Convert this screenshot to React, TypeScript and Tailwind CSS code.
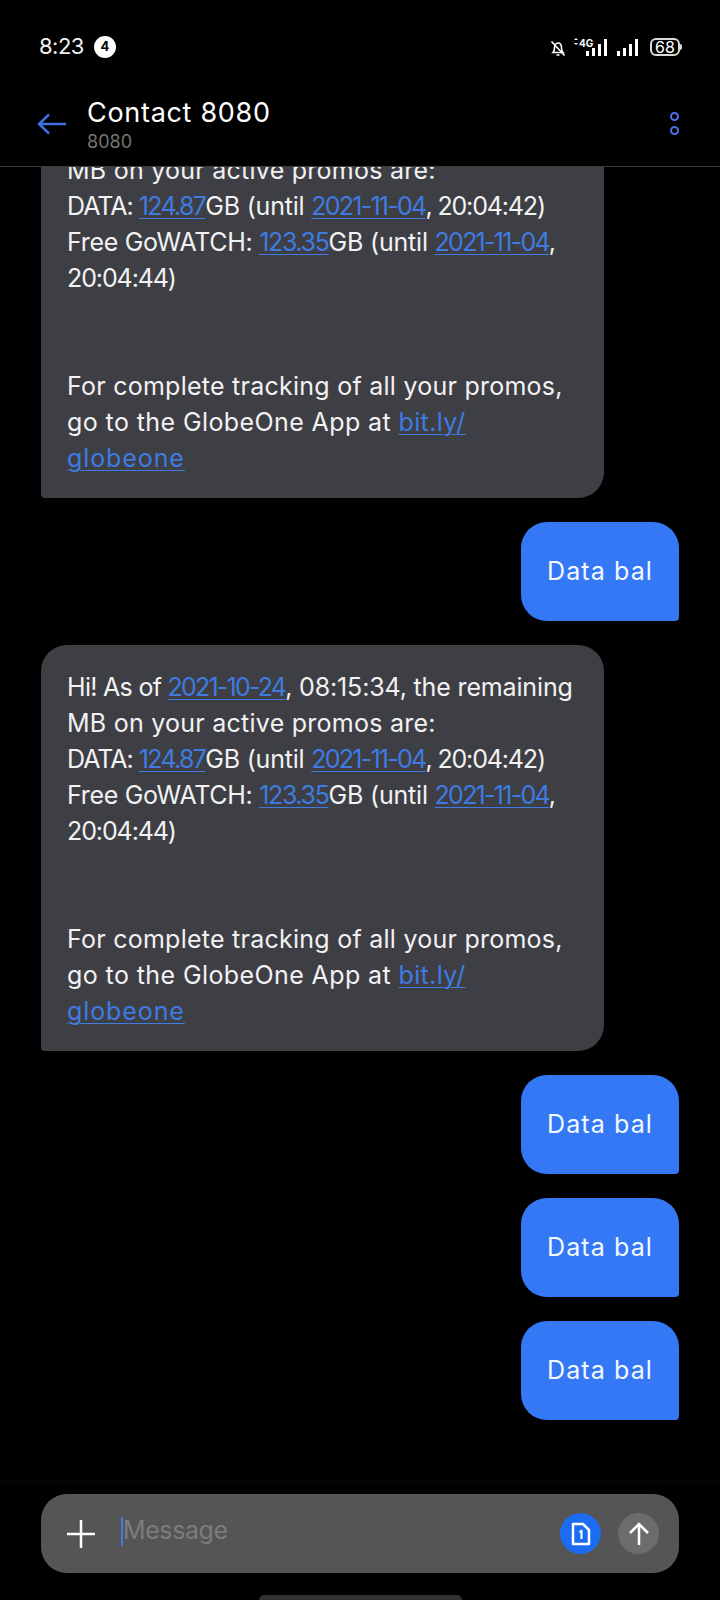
import React from "react";

const Link: React.FC<{ children: React.ReactNode; className?: string }> = ({ children, className }) => (
  <span className={`text-[#3f7be0] underline underline-offset-[3px] decoration-1 ${className}`}>{children}</span>
);

const IncomingBubble = () => (
  <div className="w-[563px] shrink-0 self-start rounded-[26px] rounded-bl-[4px] bg-[#3e3f45] px-[26px] pt-[24px] pb-[22px] text-[25px] leading-[36px] text-[#f2f2f2] whitespace-nowrap">
    <div className="tracking-[-0.15px]">
      <span className="tracking-[-0.7px]">Hi! As of </span>
      <Link className="tracking-[-1.8px]">2021-10-24</Link>, 08:15:34, the remaining
    </div>
    <div className="tracking-[0.25px]">MB on your active promos are:</div>
    <div>
      <span className="tracking-[-1px]">DATA: </span>
      <Link className="tracking-[-1.7px]">124.87</Link>
      <span className="tracking-[-0.2px]">GB (until </span>
      <Link className="tracking-[-1.75px]">2021-11-04</Link>
      <span className="tracking-[-1.15px]">, 20:04:42)</span>
    </div>
    <div>
      <span className="tracking-[-0.3px]">Free GoWATCH: </span>
      <Link className="tracking-[-1.35px]">123.35</Link>
      <span className="tracking-[-0.2px]">GB (until </span>
      <Link className="tracking-[-1.75px]">2021-11-04</Link>,
    </div>
    <div className="tracking-[-1.1px]">20:04:44)</div>
    <div className="h-[72px]" />
    <div className="tracking-[0.25px]">For complete tracking of all your promos,</div>
    <div className="tracking-[0.4px]">
      go to the GlobeOne App at <Link className="tracking-[0.37px]">bit.ly/</Link>
    </div>
    <div>
      <Link className="tracking-[0.9px]">globeone</Link>
    </div>
  </div>
);

const OutgoingBubble = () => (
  <div className="flex h-[99px] w-[158px] shrink-0 items-center justify-center self-end rounded-[26px] rounded-br-[4px] bg-[#3478f6] text-[25px] tracking-[1.1px] text-[#f4f8ff]">
    Data bal
  </div>
);

const StatusIcons = () => (
  <div className="flex items-center text-white">
    <svg width="16" height="17" viewBox="0 0 16 17" fill="none" stroke="currentColor" strokeWidth="1.6" className="mr-[8px] mt-[3px]">
      <path d="M3 12.5c1-1 1.5-2 1.5-4.5S6 3 8 3s3.5 1.5 3.5 5c0 2.500.5 3.500 1.500 4.500H3z" />
      <path d="M6.500 15h3M1.500 1.500l13 14" />
    </svg>
    <svg width="33" height="18" viewBox="0 0 33 18" fill="white" className="mr-[10px]">
      <path d="M0 2l2-2 2 2H0zM0 5h4L2 7 0 5z" />
      <text x="5" y="9" fontSize="10" fontWeight="700" fontFamily="Inter, sans-serif">4G</text>
      <rect x="12" y="13" width="3" height="5" />
      <rect x="18" y="10" width="3" height="8" />
      <rect x="24" y="6" width="3" height="12" />
      <rect x="30" y="1" width="3" height="17" />
    </svg>
    <svg width="21" height="18" viewBox="0 0 21 18" fill="white" className="mr-[12px]">
      <rect x="0" y="13" width="3" height="5" />
      <rect x="6" y="10" width="3" height="8" />
      <rect x="12" y="6" width="3" height="12" />
      <rect x="18" y="1" width="3" height="17" />
    </svg>
    <div className="relative flex h-[18px] w-[30px] items-center justify-center rounded-[6px] border-2 border-[#d9d9d9] text-[16px] leading-none text-white">
      68
      <span className="absolute -right-[4px] top-[4px] h-[6px] w-[2px] rounded-r-sm bg-[#d9d9d9]" />
    </div>
  </div>
);

export default function App() {
  return (
    <div className="flex h-[1600px] w-[720px] flex-col overflow-hidden bg-black font-['Inter',sans-serif]">
      <header className="h-[167px] shrink-0 border-b border-[#3d3d3d]">
        <div className="flex h-[94px] items-center justify-between pb-[1px] pl-[39px] pr-[40px]">
          <div className="flex items-center">
            <span className="text-[22px] tracking-[-0.5px] text-[#f0f0f0]">8:23</span>
            <span className="ml-[10px] flex h-[22px] w-[22px] items-center justify-center rounded-full bg-white text-[13px] font-bold text-black">
              4
            </span>
          </div>
          <StatusIcons />
        </div>
        <div className="flex items-start justify-between pl-[37px] pr-[40px]">
          <div className="flex items-start">
            <svg width="30" height="22" viewBox="0 0 30 22" fill="none" stroke="#3f6fe0" strokeWidth="2.500" className="mt-[19px]">
              <path d="M29 11H2M12 1.500L2 11l10 9.500" />
            </svg>
            <div className="ml-[20px] pt-[2px]">
              <div className="text-[27px] leading-[34px] tracking-[0.7px] text-white">Contact 8080</div>
              <div className="mt-[1px] text-[18px] leading-[22px] text-[#757575]">8080</div>
            </div>
          </div>
          <div className="mt-[18px] mr-[1px] flex flex-col gap-[5px]">
            <span className="h-[9px] w-[9px] rounded-full border-2 border-[#4d6fe8]" />
            <span className="h-[9px] w-[9px] rounded-full border-2 border-[#4d6fe8]" />
          </div>
        </div>
      </header>

      <main className="flex min-h-0 flex-1 flex-col justify-end gap-[24px] overflow-hidden pl-[41px] pr-[41px] pb-[60px]">
        <IncomingBubble />
        <OutgoingBubble />
        <IncomingBubble />
        <OutgoingBubble />
        <OutgoingBubble />
        <OutgoingBubble />
      </main>

      <footer className="shrink-0 bg-gradient-to-b from-[#0a0705] to-black to-[10px] px-[41px] pt-[14px]">
        <div className="flex h-[79px] items-center rounded-[26px] bg-[#555555] pl-[25px] pr-[20px]">
          <svg width="30" height="30" viewBox="0 0 30 30" stroke="white" strokeWidth="2.500">
            <path d="M15 1v28M1 15h28" />
          </svg>
          <span className="ml-[25px] mb-[5px] h-[29px] w-[2px] bg-[#3f7be0]" />
          <span className="mb-[6px] flex-1 text-[25px] tracking-[-0.4px] text-[#7c7c7c]">Message</span>
          <div className="flex h-[41px] w-[41px] items-center justify-center rounded-full bg-[#1b6cf0]">
            <svg width="20" height="24" viewBox="0 0 20 24" fill="none" stroke="white" strokeWidth="2.500">
              <path d="M2 2h10l6 6v14H2z" strokeLinejoin="round" />
              <path d="M8.500 10l2-1v8" strokeWidth="2" />
            </svg>
          </div>
          <div className="ml-[17px] flex h-[41px] w-[41px] items-center justify-center rounded-full bg-[#6c6c6c]">
            <svg width="22" height="24" viewBox="0 0 22 24" fill="none" stroke="white" strokeWidth="2.500">
              <path d="M11 23V2M2 11l9-9 9 9" />
            </svg>
          </div>
        </div>
        <div className="mx-auto mt-[22px] h-[5px] w-[203px] rounded-t-full bg-[#333333]" />
      </footer>
    </div>
  );
}
